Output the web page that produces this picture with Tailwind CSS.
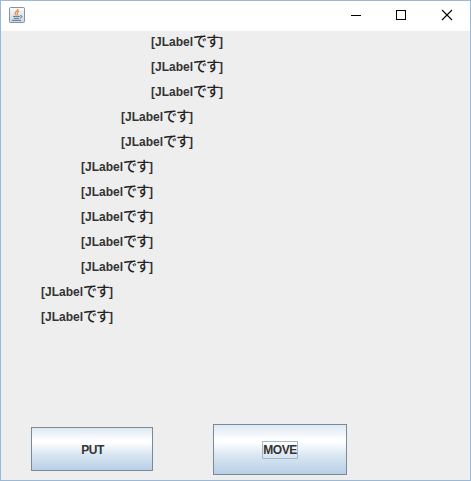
<!DOCTYPE html>
<html lang="ja">
<head>
<meta charset="utf-8">
<script src="https://cdn.jsdelivr.net/npm/@tailwindcss/browser@4"></script>
</head>
<body class="overflow-hidden">
<div class="w-[471px] h-[481px] border border-[#9bb9d5] bg-[#eeeeee] flex flex-col text-[#333333] font-bold text-[12px] font-['Liberation_Sans','Noto_Sans_CJK_JP',sans-serif]">
  <header class="h-[30px] shrink-0 bg-white flex items-start justify-between">
    <svg class="ml-2 mt-[6px]" width="16" height="16" viewBox="0 0 16 16" fill="none">
      <defs><linearGradient id="g" x1="0" y1="0" x2="0" y2="1"><stop offset="0" stop-color="#fafbfc"/><stop offset="1" stop-color="#cbd6df"/></linearGradient></defs>
      <rect x=".5" y=".5" width="15" height="15" rx="1" fill="url(#g)" stroke="#8395a3"/>
      <path d="M9 2C9.300 4 5.800 4.500 6.100 6.300C6.300 7.300 7 7.600 7.100 8.300M10.300 4.200C8.600 4.800 7.800 5.600 8.500 6.600C8.900 7.200 8.300 7.800 8.100 8.300" stroke="#ec8a3c" stroke-width="1.200"/>
      <path d="M4 9.400H10.800M4.800 11.300H10M11 8.700C13.900 8.400 13.400 10.600 11 11M3 13.300H12" stroke="#557794"/>
    </svg>
    <div class="flex text-black">
      <svg width="138" height="30" viewBox="0 0 138 30" fill="none" stroke="currentColor" shape-rendering="crispEdges">
        <path d="M19 14.500H29"/>
        <rect x="64.500" y="9.500" width="9" height="9"/>
        <path d="M110 9L120 19M120 9L110 19" shape-rendering="auto" stroke-width="1.100"/>
      </svg>
    </div>
  </header>
  <main class="flex-1 flex flex-col min-h-0">
    <div class="h-[390px] shrink-0 flex flex-col leading-[22px] whitespace-nowrap [&_span]:inline-block [&_span]:leading-none [&_span]:text-[14px] [&_span]:tracking-[-1px] [&_span]:font-medium [&_span]:text-[#222222]">
      <div class="h-[25px] pl-[150px]">[JLabel<span>です</span>]</div>
      <div class="h-[25px] pl-[150px]">[JLabel<span>です</span>]</div>
      <div class="h-[25px] pl-[150px]">[JLabel<span>です</span>]</div>
      <div class="h-[25px] pl-[120px]">[JLabel<span>です</span>]</div>
      <div class="h-[25px] pl-[120px]">[JLabel<span>です</span>]</div>
      <div class="h-[25px] pl-20">[JLabel<span>です</span>]</div>
      <div class="h-[25px] pl-20">[JLabel<span>です</span>]</div>
      <div class="h-[25px] pl-20">[JLabel<span>です</span>]</div>
      <div class="h-[25px] pl-20">[JLabel<span>です</span>]</div>
      <div class="h-[25px] pl-20">[JLabel<span>です</span>]</div>
      <div class="h-[25px] pl-10">[JLabel<span>です</span>]</div>
      <div class="h-[25px] pl-10">[JLabel<span>です</span>]</div>
    </div>
    <div class="flex items-start pl-[30px] gap-[60px] pt-[3px] tracking-[-0.5px]">
      <button class="mt-[3px] w-[122px] h-[44px] pt-px pl-px border border-[#7a8a99] bg-[linear-gradient(to_bottom,#dde8f3_0%,#ffffff_30%,#ffffff_35%,#dce8f3_60%,#b8cfe5_100%)]">PUT</button>
      <button class="w-[134px] h-[51px] border border-[#7a8a99] bg-[linear-gradient(to_bottom,#dde8f3_0%,#ffffff_30%,#ffffff_35%,#dce8f3_60%,#b8cfe5_100%)] flex items-center justify-center"><span class="border border-[#a3b8cc] w-[36px] h-[18px] leading-[17px] flex justify-center">MOVE</span></button>
    </div>
  </main>
</div>
</body>
</html>
